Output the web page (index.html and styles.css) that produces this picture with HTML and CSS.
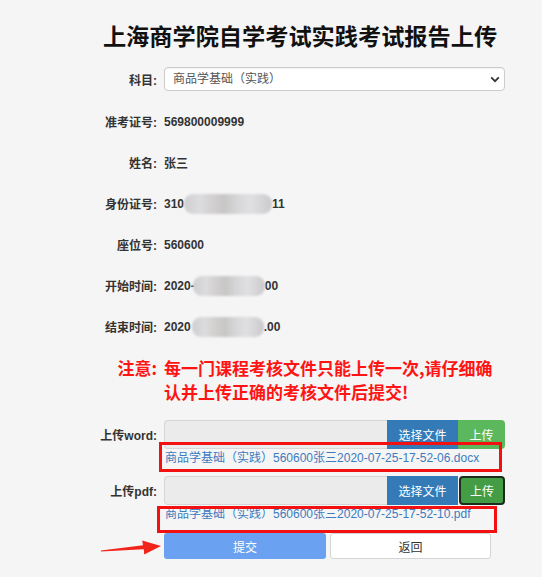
FILE: index.html
```html
<!DOCTYPE html>
<html lang="zh-CN">
<head>
<meta charset="utf-8">
<title>上海商学院自学考试实践考试报告上传</title>
<link rel="stylesheet" href="styles.css">
</head>
<body>
<div class="page">
  <h1 class="title">上海商学院自学考试实践考试报告上传</h1>

  <div class="row row-select">
    <label class="label">科目:</label>
    <div class="field select-wrap">
      <select class="select"><option>商品学基础（实践）</option></select>
      <svg class="chevron" width="10" height="7" viewBox="0 0 10 7"><path d="M1.2 1.4 L5 5.2 L8.8 1.4" fill="none" stroke="#333" stroke-width="1.8"/></svg>
    </div>
  </div>

  <div class="row info"><span class="label">准考证号:</span><span class="value">569800009999</span></div>
  <div class="row info"><span class="label">姓名:</span><span class="value">张三</span></div>
  <div class="row info"><span class="label">身份证号:</span><span class="value">310<span class="blur b-id"></span>11</span></div>
  <div class="row info"><span class="label">座位号:</span><span class="value">560600</span></div>
  <div class="row info"><span class="label">开始时间:</span><span class="value">2020-<span class="blur b-time"></span>00</span></div>
  <div class="row info"><span class="label">结束时间:</span><span class="value">2020<span class="blur b-time2"></span>.00</span></div>

  <div class="row notice">
    <span class="label notice-label">注意:</span>
    <p class="field notice-text">每一门课程考核文件只能上传一次,请仔细确认并上传正确的考核文件后提交!</p>
  </div>

  <div class="row upload">
    <span class="label">上传word:</span>
    <div class="field group">
      <div class="file-box"></div>
      <button class="btn btn-choose">选择文件</button>
      <button class="btn btn-up">上传</button>
    </div>
  </div>
  <div class="row link-row link-word">
    <span class="label"></span>
    <div class="field link-cell">
      <a class="file-link">商品学基础（实践）560600张三2020-07-25-17-52-06.docx</a>
      <span class="mark mark-word"></span>
    </div>
  </div>

  <div class="row upload">
    <span class="label">上传pdf:</span>
    <div class="field group">
      <div class="file-box"></div>
      <button class="btn btn-choose">选择文件</button>
      <button class="btn btn-up btn-up-active">上传</button>
    </div>
  </div>
  <div class="row link-row link-pdf">
    <span class="label"></span>
    <div class="field link-cell">
      <a class="file-link">商品学基础（实践）560600张三2020-07-25-17-52-10.pdf</a>
      <span class="mark mark-pdf"></span>
    </div>
  </div>

  <div class="row actions">
    <span class="label"></span>
    <div class="field btns">
      <svg class="arrow" width="64" height="19" viewBox="0 0 64 19"><path d="M1 13.4 L43 8.2 L42.2 3.6 L61 9 L44.2 17.6 L43.8 12.2 L1 14.6 Z" fill="#f0241b"/></svg>
      <button class="btn btn-submit">提交</button>
      <button class="btn btn-back">返回</button>
    </div>
  </div>
</div>
</body>
</html>
```

FILE: styles.css
```css
html, body {
  margin: 0;
  padding: 0;
  background: #f5f5f5;
}
body {
  font-family: "Liberation Sans", Arial, "Noto Sans CJK SC", sans-serif;
  font-size: 12px;
  color: #333;
}
.page {
  padding-top: 22px;
  width: 505px;
  position: relative;
}
.title {
  margin: 0 0 0 95px;
  width: 410px;
  text-align: center;
  font-size: 23.2px;
  line-height: 30px;
  font-weight: bold;
  color: #111;
  white-space: nowrap;
}
.row {
  display: flex;
  align-items: center;
}
.label {
  width: 157px;
  flex: none;
  text-align: right;
  font-weight: bold;
  color: #333;
  box-sizing: border-box;
  white-space: nowrap;
}
.field {
  margin-left: 7px;
  width: 341px;
  flex: none;
  box-sizing: border-box;
}
.row-select {
  margin-top: 15px;
  height: 24px;
}
.select-wrap {
  position: relative;
  height: 24px;
}
.select {
  appearance: none;
  -webkit-appearance: none;
  width: 100%;
  height: 24px;
  margin: 0;
  border: 1px solid #ccc;
  border-radius: 4px;
  background: #fff;
  padding: 0 8px;
  font-family: inherit;
  font-size: 12px;
  color: #555;
  box-shadow: inset 0 1px 1px rgba(0,0,0,.06);
}
.chevron {
  position: absolute;
  right: 5px;
  top: 9px;
}
.row-select + .info {
  margin-top: 10px;
}
.info {
  height: 41px;
}
.value {
  margin-left: 7px;
  font-weight: bold;
  display: inline-flex;
  align-items: center;
  white-space: nowrap;
}
.blur {
  display: inline-block;
  height: 20px;
  border-radius: 9px;
  background: linear-gradient(90deg, #cfcfd2 0%, #dcdcde 18%, #d2d0d0 32%, #c9c7c6 46%, #d6d6d8 60%, #e0e0e2 76%, #cacacd 100%);
  filter: blur(0.8px);
}
.b-id { width: 88px; margin-left: 0px; }
.b-time { width: 72px; margin-left: -2px; }
.b-time2 { width: 72px; margin-left: 1px; }
.notice {
  margin-top: 9px;
  align-items: flex-start;
}
.notice-label,
.notice-text {
  font-size: 17px;
  line-height: 24px;
  font-weight: bold;
  color: #ff1414;
}
.notice-label {
  font-family: "Noto Sans CJK SC", sans-serif;
}
.notice-text {
  margin-top: 0;
  margin-bottom: 0;
  font-family: "Noto Sans CJK SC", sans-serif;
}
.upload {
  height: 29px;
}
.notice + .upload {
  margin-top: 16px;
}
.group {
  display: flex;
  height: 29px;
}
.file-box {
  flex: 1;
  background: #ebebeb;
  border: 1px solid #d6d6d6;
  border-right: none;
  border-radius: 4px 0 0 4px;
}
.btn {
  font-family: inherit;
  font-size: 12px;
  margin: 0;
  padding: 0;
  border: none;
  cursor: pointer;
}
.btn-choose {
  width: 71px;
  background: #337ab7;
  color: #fff;
}
.btn-up {
  width: 47px;
  background: #5cb85c;
  color: #fff;
  border-radius: 0 4px 4px 0;
}
.btn-up-active {
  background: #449d44;
  border: 2px solid #1d2b1d;
  border-radius: 4px;
  margin-left: 1px;
  width: 46px;
}
.link-row {
  align-items: flex-start;
}
.link-word { height: 27px; }
.link-pdf { height: 28px; }
.link-cell {
  position: relative;
  height: 100%;
}
.file-link {
  display: block;
  line-height: 18px;
  padding-left: 1px;
  color: #3b7bbf;
  white-space: nowrap;
  font-family: "Liberation Sans", Arial, "Noto Sans CJK SC", sans-serif;
}
.mark {
  position: absolute;
  border: 3px solid #f21010;
  box-sizing: border-box;
  pointer-events: none;
}
.mark-word {
  left: -5px;
  top: -7px;
  width: 343px;
  height: 30px;
}
.mark-pdf {
  left: -7px;
  top: 1px;
  width: 340px;
  height: 27px;
}
.actions {
  height: 26px;
}
.btns {
  position: relative;
  display: flex;
  height: 26px;
}
.btn-submit {
  width: 162px;
  background: #6aa1f0;
  color: #fff;
  border-radius: 3px;
}
.btn-back {
  width: 161px;
  margin-left: 4px;
  background: #fff;
  color: #333;
  border: 1px solid #d4d4d4;
  border-radius: 3px;
}
.arrow {
  position: absolute;
  left: -64px;
  top: 4px;
}
```
